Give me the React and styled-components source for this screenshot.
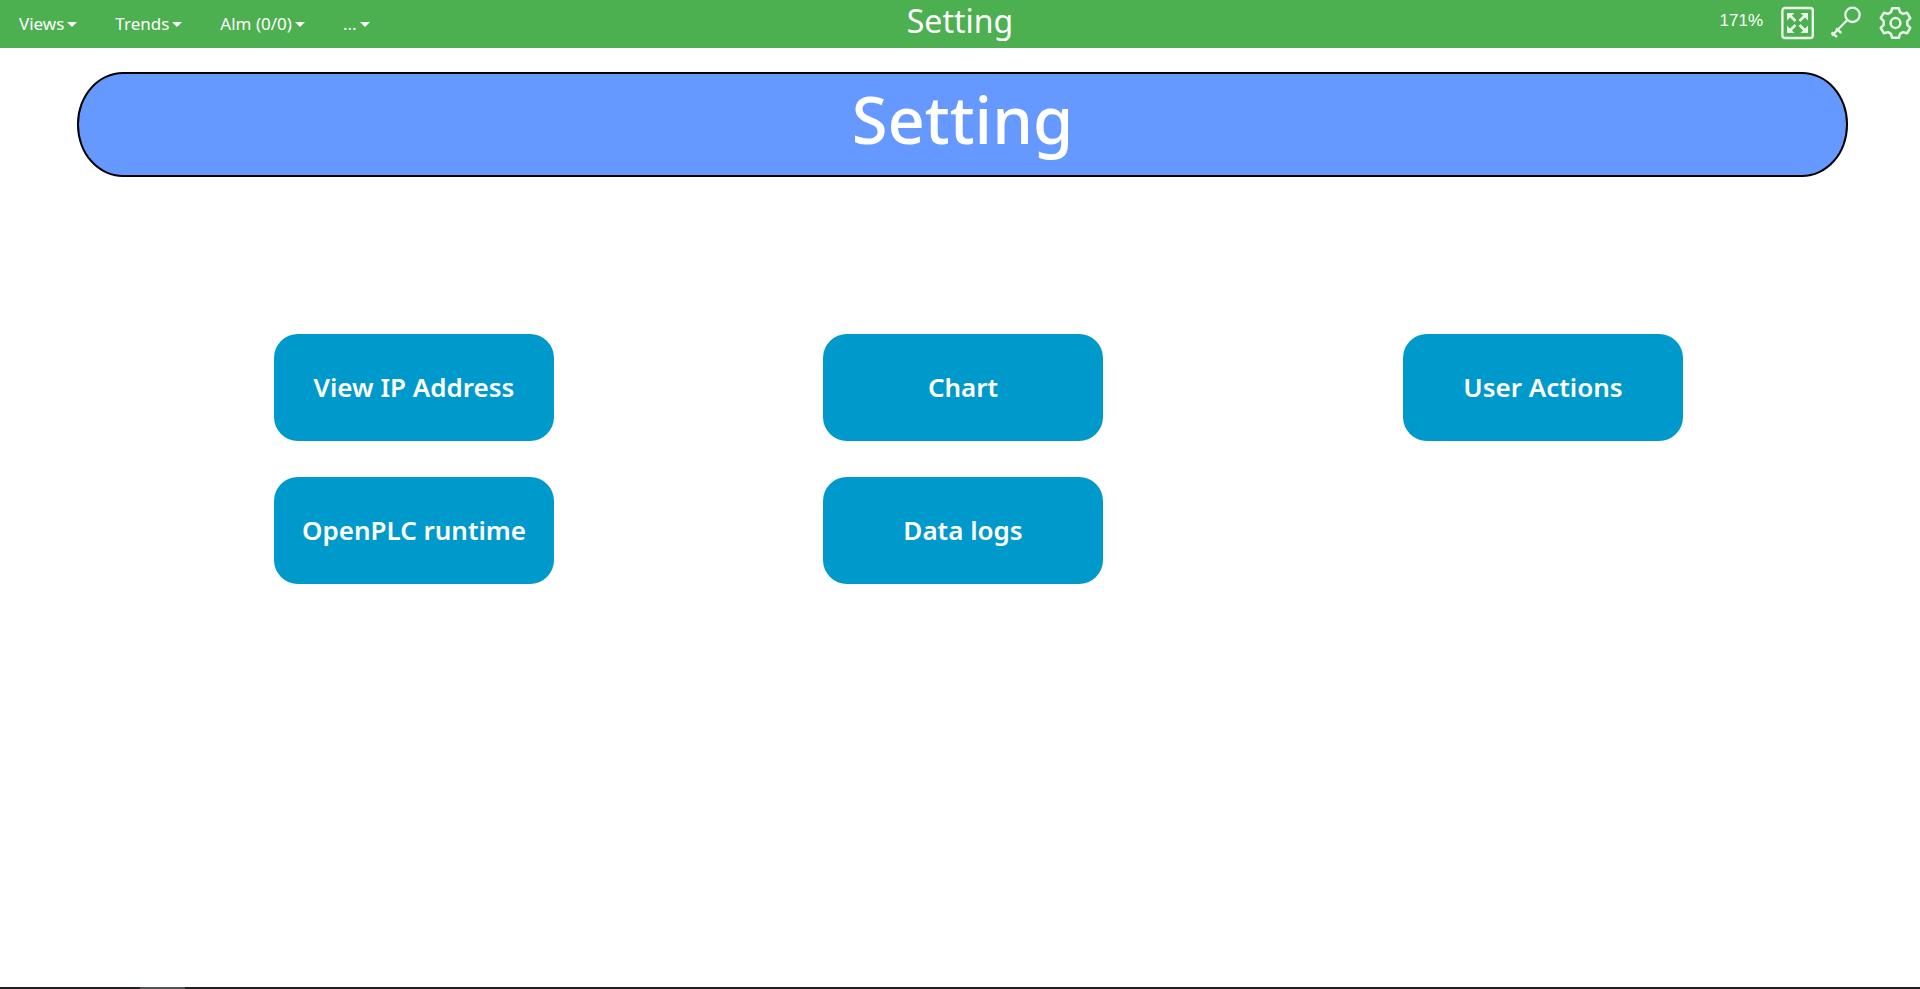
import React from 'react';
import styled, { createGlobalStyle } from 'styled-components';

const GlobalStyle = createGlobalStyle`
  *, *::before, *::after { box-sizing: border-box; }
  body { margin: 0; background: #fff; font-family: "Noto Sans", sans-serif; }
`;

const Page = styled.div`
  min-height: 100vh;
  display: flex;
  flex-direction: column;
`;

const Header = styled.header`
  display: grid;
  grid-template-columns: 1fr auto 1fr;
  height: 48px;
  background: #4caf50;
  color: #fff;
`;

const Menus = styled.nav`
  display: flex;
  align-items: center;
  gap: 38px;
  padding-left: 19px;
`;

const MenuButton = styled.button`
  display: flex;
  align-items: center;
  gap: 3px;
  padding: 0;
  border: 0;
  background: none;
  color: inherit;
  font: 17px/24px "Noto Sans", sans-serif;
  cursor: pointer;
  &::after {
    content: "";
    border: 5px solid transparent;
    border-top-color: currentColor;
    border-bottom: 0;
  }
`;

const ViewTitle = styled.div`
  font-size: 32px;
  line-height: 42px;
`;

const Tools = styled.div`
  display: flex;
  justify-content: flex-end;
  gap: 16px;
  padding: 6px 8px 0 0;
`;

const Zoom = styled.span`
  padding-right: 2px;
  font: 17px/30px "Liberation Sans", sans-serif;
`;

const ToolButton = styled.button`
  width: 33px;
  height: 34px;
  padding: 0;
  border: 0;
  background: none;
  color: #eaf6ea;
  cursor: pointer;
  svg { display: block; width: 100%; height: 100%; }
`;

const Main = styled.main`
  flex: 1;
`;

const Banner = styled.h1`
  display: flex;
  justify-content: center;
  height: 105px;
  margin: 24px 72px 0 77px;
  border: 2px solid #000;
  border-radius: 46px / 52px;
  background: #6699ff;
  color: #fff;
  font-size: 65px;
  font-weight: 500;
  line-height: 90px;
`;

const Actions = styled.div`
  display: grid;
  grid-template-columns: 274fr 549fr 580fr 517fr;
  row-gap: 36px;
  margin-top: 157px;
`;

const ActionButton = styled.button`
  grid-column: ${(p) => p.$column};
  grid-row: ${(p) => p.$row};
  width: 280px;
  height: 107px;
  padding: 0 0 2px;
  border: 0;
  border-radius: 24px;
  background: #0099cc;
  color: #fff;
  font: 600 26px/36px "Noto Sans", sans-serif;
  cursor: pointer;
`;

const BottomBar = styled.footer`
  height: 2px;
  padding-left: 140px;
  background: #231f20;
  &::before {
    content: "";
    display: block;
    width: 45px;
    height: 2px;
    background: #555253;
  }
`;

const FullscreenIcon = () => (
  <svg viewBox="0 0 33 34" fill="none" stroke="currentColor" strokeWidth="2.4" aria-hidden="true">
    <rect x="1.4" y="2" width="30.4" height="30" rx="2.5" />
    <path d="M8 8.500l6.500 6.500M25 8.500l-6.500 6.500M8 25.500l6.500-6.500M25 25.500l-6.500-6.500" strokeWidth="2.6" />
    <path d="M6 7h7.500l-7.500 7.500zM27 7h-7.500l7.500 7.500zM6 27h7.500l-7.500-7.500zM27 27h-7.500l7.500-7.500z" fill="currentColor" stroke="none" />
  </svg>
);

const KeyIcon = () => (
  <svg viewBox="0 0 33 34" fill="none" stroke="currentColor" strokeWidth="2.3" aria-hidden="true">
    <circle cx="22.500" cy="8.800" r="7.200" />
    <path d="M17.300 14L2 29.500M1.500 26.500l5.500 4.500M6 22.500l5.500 4.500" />
  </svg>
);

const GearIcon = () => (
  <svg viewBox="0 0 33 34" fill="none" stroke="currentColor" strokeWidth="2.500" strokeLinejoin="round" aria-hidden="true">
    <path d="M13.200 2.200h6.600l1.200 4 3 1.700 4-1.200 3.300 5.500-3 3v3.600l3 3-3.300 5.500-4-1.200-3 1.700-1.200 4h-6.600l-1.200-4-3-1.700-4 1.200-3.300-5.500 3-3v-3.600l-3-3 3.300-5.500 4 1.200 3-1.700z" />
    <circle cx="16.500" cy="17" r="4.900" />
  </svg>
);

const menus = ['Views', 'Trends', 'Alm (0/0)', '...'];

const actions = [
  { label: 'View IP Address', column: 2, row: 1 },
  { label: 'Chart', column: 3, row: 1 },
  { label: 'User Actions', column: 4, row: 1 },
  { label: 'OpenPLC runtime', column: 2, row: 2 },
  { label: 'Data logs', column: 3, row: 2 },
];

export default function App() {
  return (
    <Page>
      <GlobalStyle />
      <Header>
        <Menus>
          {menus.map((m) => <MenuButton key={m} type="button">{m}</MenuButton>)}
        </Menus>
        <ViewTitle>Setting</ViewTitle>
        <Tools>
          <Zoom>171%</Zoom>
          <ToolButton type="button" aria-label="Fullscreen"><FullscreenIcon /></ToolButton>
          <ToolButton type="button" aria-label="Log in"><KeyIcon /></ToolButton>
          <ToolButton type="button" aria-label="Settings"><GearIcon /></ToolButton>
        </Tools>
      </Header>
      <Main>
        <Banner>Setting</Banner>
        <Actions>
          {actions.map((a) => (
            <ActionButton key={a.label} type="button" $column={a.column} $row={a.row}>{a.label}</ActionButton>
          ))}
        </Actions>
      </Main>
      <BottomBar />
    </Page>
  );
}
